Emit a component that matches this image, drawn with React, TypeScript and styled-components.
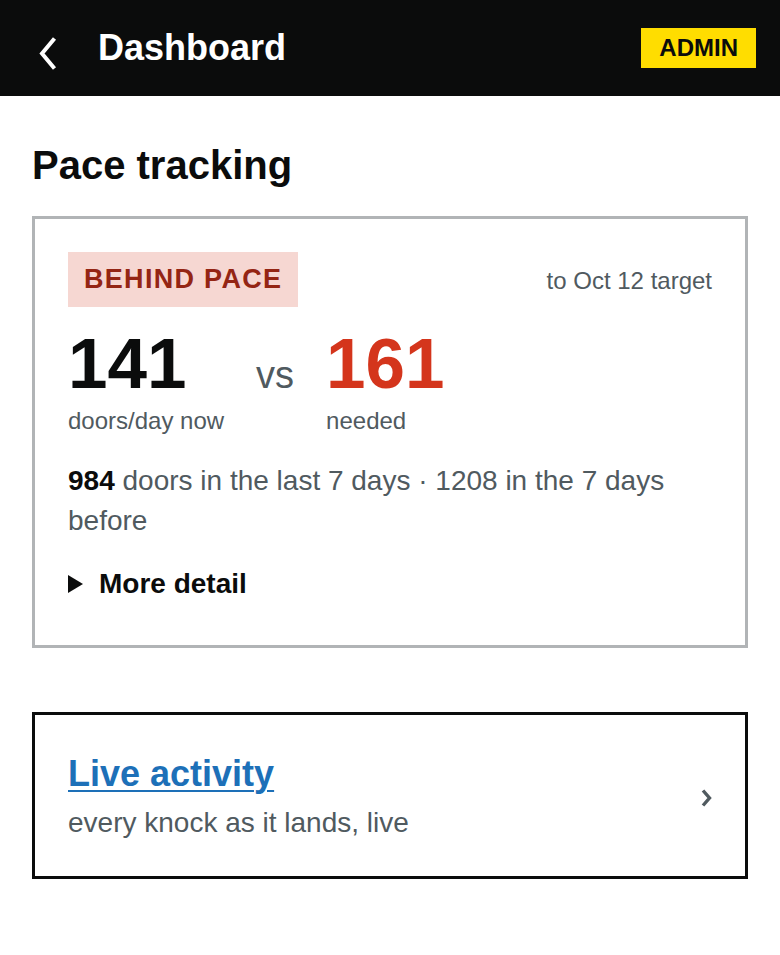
import React from "react";
import styled, { createGlobalStyle } from "styled-components";

const GlobalStyle = createGlobalStyle`
  html, body {
    margin: 0;
    padding: 0;
    background: #ffffff;
  }
  body {
    font-family: "Liberation Sans", Arial, Helvetica, sans-serif;
    color: #0b0c0c;
    -webkit-font-smoothing: antialiased;
  }
  * { box-sizing: border-box; }
`;

const Header = styled.header`
  display: flex;
  align-items: center;
  height: 96px;
  padding: 0 24px 0 38px;
  background: #0b0c0c;
`;

const BackButton = styled.button`
  display: flex;
  align-items: center;
  padding: 0;
  margin: 11px 41px 0 0;
  border: 0;
  background: none;
  cursor: pointer;
`;

const HeaderTitle = styled.h1`
  flex: 1;
  margin: 0;
  font-size: 36px;
  line-height: 1;
  font-weight: 700;
  color: #ffffff;
`;

const AdminTag = styled.span`
  display: inline-block;
  height: 40px;
  padding: 0 18px;
  background: #ffdd00;
  color: #0b0c0c;
  font-size: 24px;
  font-weight: 700;
  line-height: 40px;
`;

const Main = styled.main`
  padding: 45px 32px 40px;
`;

const PageTitle = styled.h2`
  margin: 0 0 27px;
  font-size: 40px;
  line-height: 48px;
  font-weight: 700;
`;

const Card = styled.section<{ $tone: "grey" | "black" }>`
  border: 3px solid ${(p) => (p.$tone === "grey" ? "#b1b4b6" : "#0b0c0c")};
  padding: ${(p) => (p.$tone === "grey" ? "33px 33px 41px" : "37px 33px 33px")};
  background: #ffffff;
`;

const TopRow = styled.div`
  display: flex;
  align-items: center;
  justify-content: space-between;
`;

const StatusTag = styled.strong`
  display: inline-block;
  padding: 12px 16px;
  background: #f6d7d2;
  color: #942514;
  font-size: 27px;
  line-height: 31px;
  font-weight: 700;
  letter-spacing: 1.3px;
`;

const Muted = styled.span<{ $size?: number }>`
  color: #505a5f;
  font-size: ${(p) => p.$size ?? 24}px;
  margin-top: 2px;
`;

const NumberGrid = styled.div`
  display: grid;
  grid-template-columns: auto auto auto;
  justify-content: start;
  column-gap: 32px;
  align-items: baseline;
  margin-top: 21px;
`;

const BigNumber = styled.span<{ $alert?: boolean }>`
  font-size: 71px;
  line-height: 72px;
  font-weight: 700;
  color: ${(p) => (p.$alert ? "#d4351c" : "#0b0c0c")};
`;

const Versus = styled.span`
  font-size: 38px;
  line-height: 38px;
  color: #505a5f;
`;

const NumberLabel = styled.span`
  font-size: 24px;
  line-height: 42px;
  color: #505a5f;
`;

const Summary = styled.p`
  margin: 19px 0 0;
  font-size: 28px;
  line-height: 40px;
  color: #505a5f;

  b {
    color: #0b0c0c;
    font-weight: 700;
  }
`;

const Details = styled.details`
  margin-top: 23px;
`;

const DetailsSummary = styled.summary`
  display: flex;
  align-items: center;
  gap: 16px;
  list-style: none;
  font-size: 28px;
  line-height: 40px;
  font-weight: 700;
  color: #0b0c0c;
  cursor: pointer;

  &::-webkit-details-marker {
    display: none;
  }
`;

const LinkCard = styled(Card)`
  display: flex;
  align-items: center;
  justify-content: space-between;
  margin-top: 64px;
`;

const LinkBody = styled.div`
  display: flex;
  flex-direction: column;
  gap: 8px;
`;

const CardLink = styled.a`
  font-size: 36px;
  line-height: 43px;
  font-weight: 700;
  color: #1d70b8;
  text-decoration: underline;
  text-decoration-thickness: 2px;
  text-underline-offset: 4px;
`;

const LinkHint = styled.span`
  font-size: 28px;
  line-height: 40px;
  color: #505a5f;
`;

const ChevronWrap = styled.span`
  display: flex;
  margin-right: 0;
`;

export default function App() {
  return (
    <>
      <GlobalStyle />
      <Header>
        <BackButton aria-label="Back">
          <svg width="19" height="33" viewBox="0 0 19 33">
            <path d="M16.5 1.5 L4 16.5 L16.5 31.5" fill="none" stroke="#ffffff" strokeWidth="4" strokeLinejoin="miter" />
          </svg>
        </BackButton>
        <HeaderTitle>Dashboard</HeaderTitle>
        <AdminTag>ADMIN</AdminTag>
      </Header>
      <Main>
        <PageTitle>Pace tracking</PageTitle>
        <Card $tone="grey">
          <TopRow>
            <StatusTag>BEHIND PACE</StatusTag>
            <Muted $size={24}>to Oct 12 target</Muted>
          </TopRow>
          <NumberGrid>
            <BigNumber>141</BigNumber>
            <Versus>vs</Versus>
            <BigNumber $alert>161</BigNumber>
            <NumberLabel>doors/day now</NumberLabel>
            <span />
            <NumberLabel>needed</NumberLabel>
          </NumberGrid>
          <Summary>
            <b>984</b> doors in the last 7 days · 1208 in the 7 days before
          </Summary>
          <Details>
            <DetailsSummary>
              <svg width="15" height="18" viewBox="0 0 15 18">
                <path d="M0 0 L15 9 L0 18 Z" fill="#0b0c0c" />
              </svg>
              More detail
            </DetailsSummary>
          </Details>
        </Card>
        <LinkCard $tone="black">
          <LinkBody>
            <CardLink href="#">Live activity</CardLink>
            <LinkHint>every knock as it lands, live</LinkHint>
          </LinkBody>
          <ChevronWrap>
            <svg width="11" height="18" viewBox="0 0 11 18">
              <path d="M2 1.5 L8.5 9 L2 16.5" fill="none" stroke="#505a5f" strokeWidth="3.4" />
            </svg>
          </ChevronWrap>
        </LinkCard>
      </Main>
    </>
  );
}
